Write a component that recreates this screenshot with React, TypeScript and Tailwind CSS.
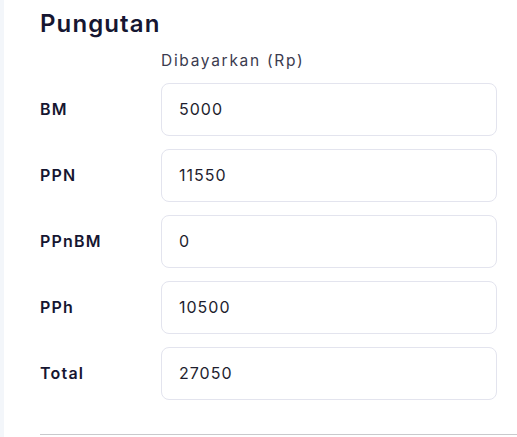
import React from "react";

const rows = [
  { label: "BM", value: "5000" },
  { label: "PPN", value: "11550" },
  { label: "PPnBM", value: "0" },
  { label: "PPh", value: "10500" },
  { label: "Total", value: "27050" },
];

export default function App() {
  return (
    <div
      className="flex w-[517px] h-[437px] overflow-hidden bg-white"
      style={{ fontFamily: "Inter, 'Noto Sans', sans-serif" }}
    >
      <div className="w-[4px] shrink-0 bg-[#f3f6fa]" />
      <div className="flex-1 pl-[36px] pt-[6px]">
        <h2 className="text-[24px] leading-[36px] font-semibold text-[#161631] tracking-[1.1px]">
          Pungutan
        </h2>
        <div className="pl-[121px] mt-[7px] text-[15.5px] leading-[24px] text-[#3b3b4f] tracking-[1.7px]">
          Dibayarkan (Rp)
        </div>
        <div className="mt-[10px] flex flex-col gap-[13px]">
          {rows.map((r) => (
            <div key={r.label} className="flex items-center">
              <div className="w-[121px] shrink-0 text-[16px] font-semibold text-[#161631] tracking-[1.2px] -mt-[2px]">
                {r.label}
              </div>
              <div className="w-[336px] h-[53px] shrink-0 rounded-[8px] border border-[#e3e4ee] flex items-center pl-[17px] pb-[2px] text-[16px] text-[#1e1e2e] tracking-[1px]">
                {r.value}
              </div>
            </div>
          ))}
        </div>
        <div className="mt-[34px] h-px bg-[#c9c9cc]" />
      </div>
    </div>
  );
}
